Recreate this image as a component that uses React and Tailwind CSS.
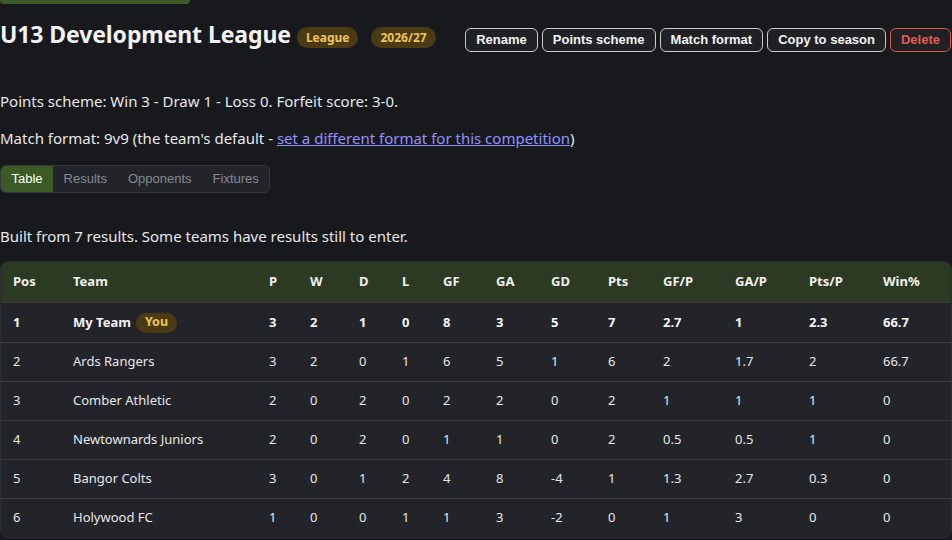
import React from "react";

const rows = [
  { pos: 1, team: "My Team", you: true, p: 3, w: 2, d: 1, l: 0, gf: 8, ga: 3, gd: 5, pts: 7, gfp: "2.7", gap: "1", ptsp: "2.3", win: "66.7" },
  { pos: 2, team: "Ards Rangers", p: 3, w: 2, d: 0, l: 1, gf: 6, ga: 5, gd: 1, pts: 6, gfp: "2", gap: "1.7", ptsp: "2", win: "66.7" },
  { pos: 3, team: "Comber Athletic", p: 2, w: 0, d: 2, l: 0, gf: 2, ga: 2, gd: 0, pts: 2, gfp: "1", gap: "1", ptsp: "1", win: "0" },
  { pos: 4, team: "Newtownards Juniors", p: 2, w: 0, d: 2, l: 0, gf: 1, ga: 1, gd: 0, pts: 2, gfp: "0.5", gap: "0.5", ptsp: "1", win: "0" },
  { pos: 5, team: "Bangor Colts", p: 3, w: 0, d: 1, l: 2, gf: 4, ga: 8, gd: -4, pts: 1, gfp: "1.3", gap: "2.7", ptsp: "0.3", win: "0" },
  { pos: 6, team: "Holywood FC", p: 1, w: 0, d: 0, l: 1, gf: 1, ga: 3, gd: -2, pts: 0, gfp: "1", gap: "3", ptsp: "0", win: "0" },
];

const cols = [
  ["Pos", "w-[60px]"],
  ["Team", "w-[196px]"],
  ["P", "w-[41px]"],
  ["W", "w-[49px]"],
  ["D", "w-[43px]"],
  ["L", "w-[41px]"],
  ["GF", "w-[53px]"],
  ["GA", "w-[55px]"],
  ["GD", "w-[57px]"],
  ["Pts", "w-[55px]"],
  ["GF/P", "w-[72px]"],
  ["GA/P", "w-[74px]"],
  ["Pts/P", "w-[74px]"],
  ["Win%", "w-[82px]"],
];

const buttons = ["Rename", "Points scheme", "Match format", "Copy to season"];

export default function App() {
  return (
    <div className="min-h-screen w-full bg-[#18191d] text-[#e8e8ea] font-['Noto_Sans',sans-serif] overflow-hidden">
      <div className="h-[4px] w-[190px] rounded-b-md bg-[#3d5a28]" />

      <div className="flex items-start mt-[14px]">
        <h1 className="text-[23px] leading-[32px] font-bold text-[#f2f2f4] tracking-[-0.1px]">
          U13 Development League
        </h1>
        <span className="ml-[6px] mt-[9px] rounded-full bg-[#4a3b15] px-[9px] h-[21px] flex items-center text-[12px] font-bold text-[#f0c45a]">
          League
        </span>
        <span className="ml-[13px] mt-[9px] rounded-full bg-[#4a3b15] px-[9px] h-[21px] flex items-center text-[12px] font-bold text-[#f0c45a]">
          2026/27
        </span>
        <div className="ml-auto mt-[10px] mr-[1px] flex gap-[4px] font-['Liberation_Sans',Arial,sans-serif]">
          {buttons.map((b) => (
            <button
              key={b}
              className="h-[24px] rounded-md border border-[#c9cacc] bg-[#1f2125] px-[10px] text-[13px] font-bold text-[#f2f2f4]"
            >
              {b}
            </button>
          ))}
          <button className="h-[24px] rounded-md border border-[#d9534f] bg-[#1f2125] px-[10px] text-[13px] font-bold text-[#e05a56]">
            Delete
          </button>
        </div>
      </div>

      <p className="mt-[39px] text-[15px] leading-[21px]">
        Points scheme: Win 3 - Draw 1 - Loss 0. Forfeit score: 3-0.
      </p>
      <p className="mt-[16px] text-[15px] leading-[21px]">
        Match format: 9v9 (the team's default -{" "}
        <a href="#" className="text-[#9191ff] underline">
          set a different format for this competition
        </a>
        )
      </p>

      <div className="mt-[16px] inline-flex h-[28px] overflow-hidden rounded-md border border-[#34373c] bg-[#22242a] font-['Liberation_Sans',Arial,sans-serif] text-[13px]">
        <span className="flex items-center bg-[#3b5a26] px-[10.5px] text-white">Table</span>
        <span className="flex items-center px-[10.5px] text-[#858a91]">Results</span>
        <span className="flex items-center px-[10.5px] text-[#858a91]">Opponents</span>
        <span className="flex items-center px-[10.5px] text-[#858a91]">Fixtures</span>
      </div>

      <p className="mt-[33px] text-[15px] leading-[21px]">
        Built from 7 results. Some teams have results still to enter.
      </p>

      <div className="mt-[14px] overflow-hidden rounded-lg border border-[#2b2e33] bg-[#222429]">
        <table className="w-full table-fixed border-separate border-spacing-0 text-left text-[13px]">
          <thead>
            <tr className="bg-[#2d3a23]">
              {cols.map(([c, w]) => (
                <th key={c} className={`${w} h-[40px] pl-[12px] font-bold text-[#f0f0f2]`}>
                  {c}
                </th>
              ))}
            </tr>
          </thead>
          <tbody>
            {rows.map((r, i) => {
              const td = `${i === 0 ? "h-[40px]" : "h-[39px]"} border-t border-[#3a3c41] pl-[12px]`;
              return (
                <tr key={r.pos} className={r.you ? "font-bold text-[#f4f4f6]" : ""}>
                  <td className={td}>{r.pos}</td>
                  <td className={td}>
                    <span className="inline-flex items-center">
                      {r.team}
                      {r.you && (
                        <span className="ml-[5px] flex h-[20px] items-center rounded-full bg-[#4a3b15] px-[9px] text-[12.5px] font-bold text-[#f0c45a]">
                          You
                        </span>
                      )}
                    </span>
                  </td>
                  <td className={td}>{r.p}</td>
                  <td className={td}>{r.w}</td>
                  <td className={td}>{r.d}</td>
                  <td className={td}>{r.l}</td>
                  <td className={td}>{r.gf}</td>
                  <td className={td}>{r.ga}</td>
                  <td className={td}>{r.gd}</td>
                  <td className={td}>{r.pts}</td>
                  <td className={td}>{r.gfp}</td>
                  <td className={td}>{r.gap}</td>
                  <td className={td}>{r.ptsp}</td>
                  <td className={td}>{r.win}</td>
                </tr>
              );
            })}
          </tbody>
        </table>
      </div>
    </div>
  );
}
